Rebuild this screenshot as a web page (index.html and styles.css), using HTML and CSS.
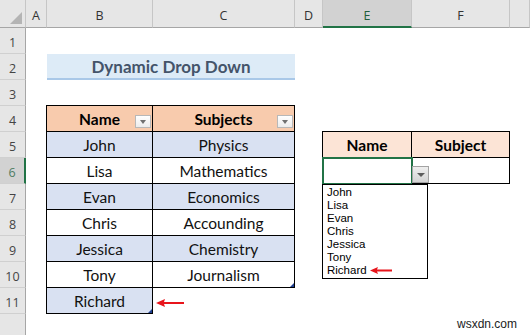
FILE: index.html
```html
<!DOCTYPE html>
<html lang="en">
<head>
  <meta charset="UTF-8">
  <title>Dynamic Drop Down</title>
  <link rel="stylesheet" href="styles.css">
</head>
<body>

<div class="sheet">
  <!-- column headers -->
  <div class="corner"></div>
  <div class="col-head">A</div>
  <div class="col-head">B</div>
  <div class="col-head">C</div>
  <div class="col-head">D</div>
  <div class="col-head active">E</div>
  <div class="col-head">F</div>
  <div class="col-head"></div>

  <!-- row headers -->
  <div class="row-heads">
    <div class="row-head">1</div>
    <div class="row-head">2</div>
    <div class="row-head">3</div>
    <div class="row-head">4</div>
    <div class="row-head">5</div>
    <div class="row-head active">6</div>
    <div class="row-head">7</div>
    <div class="row-head">8</div>
    <div class="row-head">9</div>
    <div class="row-head">10</div>
    <div class="row-head">11</div>
    <div class="row-head"></div>
  </div>

  <div class="title">Dynamic Drop Down</div>

  <!-- source table -->
  <div class="data">
    <div class="cell head">Name<span class="filter"></span></div>
    <div class="cell head">Subjects<span class="filter"></span></div>
    <div class="cell band">John</div>
    <div class="cell band">Physics</div>
    <div class="cell">Lisa</div>
    <div class="cell">Mathematics</div>
    <div class="cell band">Evan</div>
    <div class="cell band">Economics</div>
    <div class="cell">Chris</div>
    <div class="cell">Accounding</div>
    <div class="cell band">Jessica</div>
    <div class="cell band">Chemistry</div>
    <div class="cell">Tony</div>
    <div class="cell handle">Journalism</div>
    <div class="cell band handle">Richard</div>
  </div>

  <div class="pointer">
    <svg width="28" height="8" viewBox="0 0 28 8"><path d="M0 4 L9 0 L8 3 L28 3 L28 5 L8 5 L9 8 Z" fill="#e8141b"/></svg>
  </div>

  <!-- lookup table with drop down -->
  <div class="lookup">
    <div class="cell head light">Name</div>
    <div class="cell head light">Subject</div>
    <div class="cell selected"></div>
    <div class="cell"></div>

    <span class="dd-button"></span>
    <ul class="dd-list">
      <li>John</li>
      <li>Lisa</li>
      <li>Evan</li>
      <li>Chris</li>
      <li>Jessica</li>
      <li>Tony</li>
      <li>Richard <svg width="22" height="7" viewBox="0 0 22 7"><path d="M0 3.5 L8 0 L7 2.5 L22 2.5 L22 4.5 L7 4.5 L8 7 Z" fill="#e8141b"/></svg></li>
    </ul>
  </div>

  <div class="watermark">wsxdn.com</div>
</div>

</body>
</html>
```

FILE: styles.css
```css
body {
  margin: 0;
  background-color: white;
  font-family: Lato, "Open Sans", sans-serif;
}

.sheet {
  position: relative;
  display: grid;
  grid-template-columns: 26px 21px 106px 142px 28px 89px 98px 20px;
  grid-template-rows: 28px repeat(12, 26px);
  width: 530px;
  height: 335px;
  overflow: hidden;
}

/* headers */
.corner,
.col-head {
  background-color: #e6e6e6;
  border-bottom: 1px solid #a6a6a6;
  box-sizing: border-box;
}

.corner {
  position: relative;
  border-right: 1px solid #c6c6c6;
}

.corner::after {
  content: "";
  position: absolute;
  right: 3px;
  bottom: 3px;
  border-left: 12px solid transparent;
  border-bottom: 12px solid #b4b4b4;
}

.col-head {
  border-right: 1px solid #c6c6c6;
  padding-top: 7px;
  text-align: center;
  font-family: "Open Sans", sans-serif;
  font-size: 12.5px;
  color: #333;
}

.col-head.active {
  background-color: #d2d2d2;
  border-bottom: 2px solid #217346;
  color: #1e5e3a;
}

.row-heads {
  grid-column: 1;
  grid-row: 2 / -1;
  display: flex;
  flex-direction: column;
}

.row-head {
  height: 26px;
  flex: none;
  box-sizing: border-box;
  padding-top: 6px;
  background-color: #e6e6e6;
  border-right: 1px solid #a6a6a6;
  border-bottom: 1px solid #d0d0d0;
  text-align: center;
  font-family: "Open Sans", sans-serif;
  font-size: 12.5px;
  color: #444;
}

.row-head.active {
  background-color: #d2d2d2;
  border-right: 2px solid #217346;
  color: #4f7d62;
}

/* title */
.title {
  grid-column: 3 / 5;
  grid-row: 3;
  background-color: #ddebf7;
  border-bottom: 2px solid #a9c8e8;
  display: flex;
  align-items: center;
  justify-content: center;
  padding-top: 1px;
  font-size: 17px;
  font-weight: bold;
  color: #44546a;
}

/* tables */
.data,
.lookup {
  display: grid;
  grid-auto-rows: 26px;
  margin: -1px 0 0 -1px;
  border-top: 1px solid #000;
  border-left: 1px solid #000;
  align-self: start;
}

.data {
  grid-column: 3 / 5;
  grid-row: 5 / 13;
  grid-template-columns: 106px 142px;
}

.lookup {
  position: relative;
  grid-column: 6 / 8;
  grid-row: 6 / 8;
  grid-template-columns: 89px 98px;
}

.cell {
  position: relative;
  display: flex;
  align-items: center;
  justify-content: center;
  box-sizing: border-box;
  border-right: 1px solid #000;
  border-bottom: 1px solid #000;
  font-size: 15.5px;
  color: #111;
}

.cell.head {
  background-color: #f8cbad;
  font-weight: bold;
  color: #000;
}

.cell.light {
  background-color: #fce4d6;
}

.cell.band {
  background-color: #d9e1f2;
}

.cell.handle::after {
  content: "";
  position: absolute;
  right: 0;
  bottom: 0;
  border-left: 4px solid transparent;
  border-bottom: 4px solid #1f3f8f;
}

.filter {
  position: absolute;
  right: 1px;
  bottom: 3px;
  width: 16px;
  height: 13px;
  box-sizing: border-box;
  background: linear-gradient(#ffffff, #ececec);
  border: 1px solid #b8b8b8;
}

.filter::after {
  content: "";
  position: absolute;
  left: 4px;
  top: 4px;
  border-left: 3.5px solid transparent;
  border-right: 3.5px solid transparent;
  border-top: 4px solid #707070;
}

.pointer {
  grid-column: 4;
  grid-row: 12;
  display: flex;
  align-items: center;
  padding-left: 3px;
  padding-top: 3px;
}

.selected {
  outline: 2px solid #217346;
  outline-offset: -1px;
}

/* drop down */
.dd-button {
  position: absolute;
  left: 89px;
  top: 34px;
  width: 17px;
  height: 17px;
  box-sizing: border-box;
  background: linear-gradient(#eeeeee, #d4d4d4);
  border: 1px solid #a3a3a3;
}

.dd-button::after {
  content: "";
  position: absolute;
  left: 4px;
  top: 6px;
  border-left: 4px solid transparent;
  border-right: 4px solid transparent;
  border-top: 4px solid #5c5c5c;
}

.dd-list {
  position: absolute;
  left: -1px;
  top: 52px;
  width: 106px;
  margin: 0;
  padding: 1px 0 1px 4px;
  box-sizing: border-box;
  list-style: none;
  background-color: white;
  border: 1px solid #000;
  font-family: "Liberation Sans", Arial, sans-serif;
  font-size: 11.5px;
  line-height: 13px;
  color: #000;
}

.dd-list svg {
  vertical-align: middle;
}

.watermark {
  position: absolute;
  left: 457px;
  top: 317px;
  font-family: "Liberation Sans", Arial, sans-serif;
  font-size: 12px;
  color: #222;
}
```
